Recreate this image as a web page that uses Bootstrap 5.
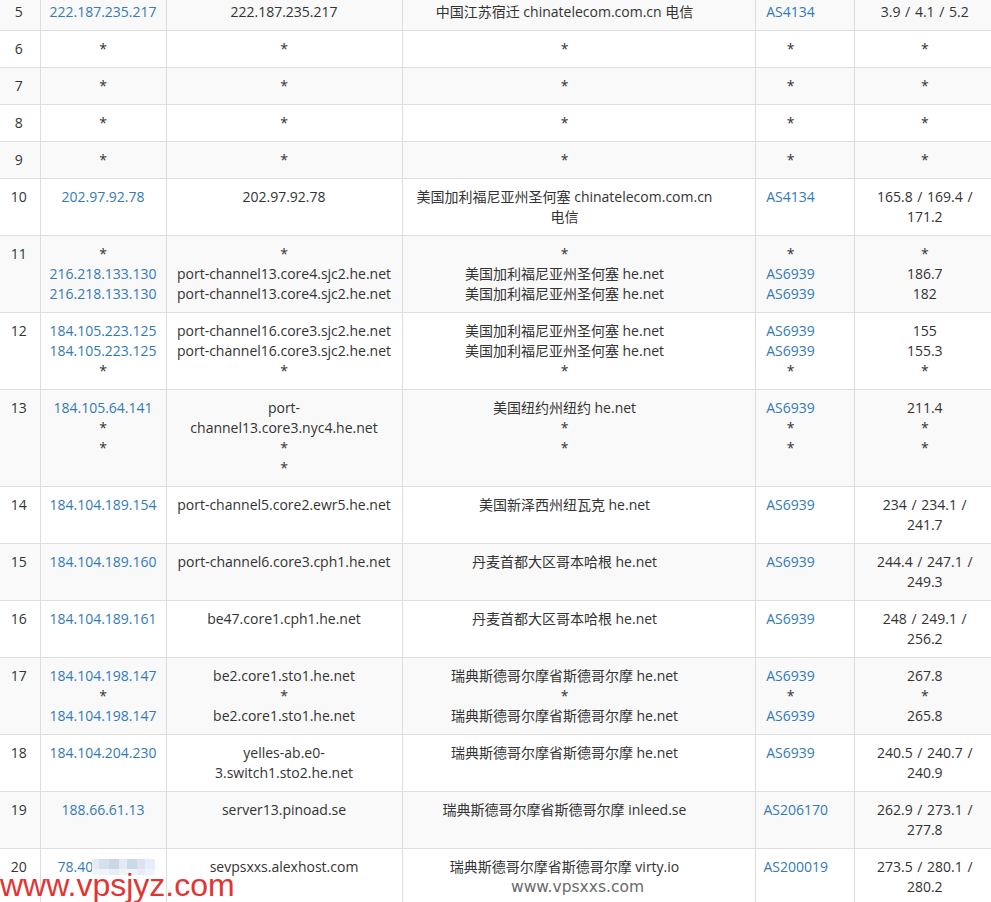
<!DOCTYPE html>
<html lang="zh"><head><meta charset="utf-8">
<link href="https://cdn.jsdelivr.net/npm/bootstrap@5.3.0/dist/css/bootstrap.min.css" rel="stylesheet">
<style>
html,body{height:902px;overflow:hidden}
body{font-family:"Open Sans","Noto Sans CJK SC",sans-serif;font-size:14px;line-height:20px;color:#333;background:#fff}
.trace{margin:-6px 0 0;table-layout:fixed;width:991px;--bs-table-striped-bg:#f9f9f9;--bs-table-striped-color:#333;--bs-table-color:#333;--bs-table-border-color:#ddd}
.trace col:nth-child(1){width:40px}
.trace col:nth-child(2){width:126px}
.trace col:nth-child(3){width:236px}
.trace col:nth-child(4){width:353px}
.trace col:nth-child(5){width:99px}
.trace col:nth-child(6){width:137px}
.trace td{padding:8px;text-align:center;vertical-align:top;line-height:20px;font-size:14px;border-width:0 1px 1px 0;border-color:#ddd}
.trace tr{border-width:0}
.trace td:first-child{padding:8px 2px 8px 0}
.trace td:nth-child(4),.trace td:nth-child(5){padding-right:36px}
.trace td:last-child{border-right:0;padding:8px 8px 8px 12px;word-spacing:1px}
.trace a{color:#337ab7;text-decoration:none}
.trace td.ip-masked{text-align:left;padding-left:17px}
.wm-red{left:0;top:868px;font:32px/34px "Liberation Sans",sans-serif;color:#e23434}
.wm-gray{left:511px;top:877px;font:15.5px/20px "DejaVu Sans",sans-serif;color:#6a6a6a}
.mosaic{left:92px;top:853px;width:63px;height:24px}
</style></head><body>
<table class="table table-striped table-bordered trace">
<colgroup><col><col><col><col><col><col></colgroup>
<tbody>
<tr><td>5</td><td><a href="#">222.187.235.217</a></td><td>222.187.235.217</td><td>中国江苏宿迁 chinatelecom.com.cn 电信</td><td><a href="#">AS4134</a></td><td>3.9 / 4.1 / 5.2</td></tr>
<tr><td>6</td><td>*</td><td>*</td><td>*</td><td>*</td><td>*</td></tr>
<tr><td>7</td><td>*</td><td>*</td><td>*</td><td>*</td><td>*</td></tr>
<tr><td>8</td><td>*</td><td>*</td><td>*</td><td>*</td><td>*</td></tr>
<tr><td>9</td><td>*</td><td>*</td><td>*</td><td>*</td><td>*</td></tr>
<tr><td>10</td><td><a href="#">202.97.92.78</a></td><td>202.97.92.78</td><td>美国加利福尼亚州圣何塞 chinatelecom.com.cn 电信</td><td><a href="#">AS4134</a></td><td>165.8 / 169.4 / 171.2</td></tr>
<tr><td>11</td><td>*<br><a href="#">216.218.133.130</a><br><a href="#">216.218.133.130</a></td><td>*<br>port-channel13.core4.sjc2.he.net<br>port-channel13.core4.sjc2.he.net</td><td>*<br>美国加利福尼亚州圣何塞 he.net<br>美国加利福尼亚州圣何塞 he.net</td><td>*<br><a href="#">AS6939</a><br><a href="#">AS6939</a></td><td>*<br>186.7<br>182</td></tr>
<tr><td>12</td><td><a href="#">184.105.223.125</a><br><a href="#">184.105.223.125</a><br>*</td><td>port-channel16.core3.sjc2.he.net<br>port-channel16.core3.sjc2.he.net<br>*</td><td>美国加利福尼亚州圣何塞 he.net<br>美国加利福尼亚州圣何塞 he.net<br>*</td><td><a href="#">AS6939</a><br><a href="#">AS6939</a><br>*</td><td>155<br>155.3<br>*</td></tr>
<tr><td>13</td><td><a href="#">184.105.64.141</a><br>*<br>*</td><td>port-channel13.core3.nyc4.he.net<br>*<br>*</td><td>美国纽约州纽约 he.net<br>*<br>*</td><td><a href="#">AS6939</a><br>*<br>*</td><td>211.4<br>*<br>*</td></tr>
<tr><td>14</td><td><a href="#">184.104.189.154</a></td><td>port-channel5.core2.ewr5.he.net</td><td>美国新泽西州纽瓦克 he.net</td><td><a href="#">AS6939</a></td><td>234 / 234.1 / 241.7</td></tr>
<tr><td>15</td><td><a href="#">184.104.189.160</a></td><td>port-channel6.core3.cph1.he.net</td><td>丹麦首都大区哥本哈根 he.net</td><td><a href="#">AS6939</a></td><td>244.4 / 247.1 / 249.3</td></tr>
<tr><td>16</td><td><a href="#">184.104.189.161</a></td><td>be47.core1.cph1.he.net</td><td>丹麦首都大区哥本哈根 he.net</td><td><a href="#">AS6939</a></td><td>248 / 249.1 / 256.2</td></tr>
<tr><td>17</td><td><a href="#">184.104.198.147</a><br>*<br><a href="#">184.104.198.147</a></td><td>be2.core1.sto1.he.net<br>*<br>be2.core1.sto1.he.net</td><td>瑞典斯德哥尔摩省斯德哥尔摩 he.net<br>*<br>瑞典斯德哥尔摩省斯德哥尔摩 he.net</td><td><a href="#">AS6939</a><br>*<br><a href="#">AS6939</a></td><td>267.8<br>*<br>265.8</td></tr>
<tr><td>18</td><td><a href="#">184.104.204.230</a></td><td>yelles-ab.e0-3.switch1.sto2.he.net</td><td>瑞典斯德哥尔摩省斯德哥尔摩 he.net</td><td><a href="#">AS6939</a></td><td>240.5 / 240.7 / 240.9</td></tr>
<tr><td>19</td><td><a href="#">188.66.61.13</a></td><td>server13.pinoad.se</td><td>瑞典斯德哥尔摩省斯德哥尔摩 inleed.se</td><td><a href="#">AS206170</a></td><td>262.9 / 273.1 / 277.8</td></tr>
<tr><td>20</td><td class="ip-masked"><a href="#">78.40</a></td><td>sevpsxxs.alexhost.com</td><td>瑞典斯德哥尔摩省斯德哥尔摩 virty.io</td><td><a href="#">AS200019</a></td><td>273.5 / 280.1 / 280.2</td></tr>
</tbody></table>
<svg class="position-absolute mosaic" viewBox="0 0 63 24" aria-hidden="true">
<rect x="8" y="0" width="42" height="1" fill="#f6f6f6"/>
<rect x="0" y="6" width="7" height="10" fill="#e3ebf4"/><rect x="7" y="6" width="10" height="10" fill="#d4e0ec"/><rect x="17" y="6" width="10" height="10" fill="#cad8e6"/><rect x="27" y="6" width="8" height="10" fill="#e2ebf5"/><rect x="35" y="6" width="10" height="10" fill="#c9d9e8"/><rect x="45" y="6" width="8" height="10" fill="#dde2ef"/><rect x="53" y="6" width="10" height="10" fill="#e6eff9"/>
<rect x="0" y="16" width="17" height="6" fill="#f0f4f8"/><rect x="17" y="16" width="10" height="6" fill="#e8eef4"/><rect x="27" y="16" width="18" height="6" fill="#eef3f8"/><rect x="45" y="16" width="8" height="6" fill="#e9ecf4"/><rect x="53" y="16" width="10" height="6" fill="#eef4fb"/>
</svg>
<div class="position-absolute wm-red">www.vpsjyz.com</div>
<div class="position-absolute wm-gray">www.vpsxxs.com</div>
</body></html>
